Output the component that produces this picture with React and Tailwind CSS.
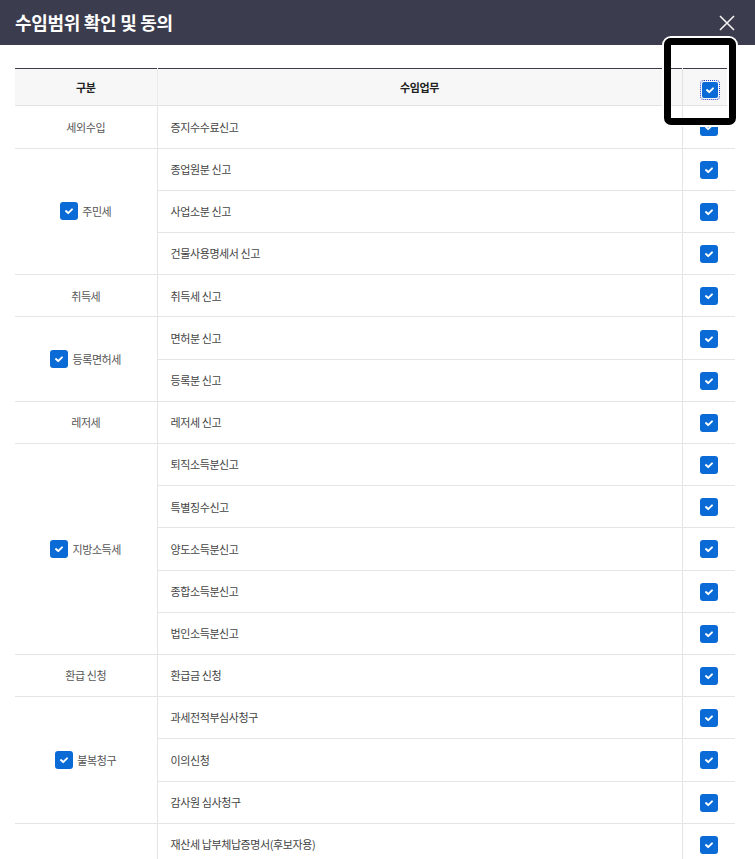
import React from 'react';

const FONT = { fontFamily: '"Noto Sans CJK KR", "Noto Sans", sans-serif' };

// 체크박스 (선택됨)
const Check = ({ focus }) => (
    <span
        className={
            focus
                ? 'inline-flex w-4 h-4 items-center justify-center rounded-[2px] bg-[#0b6bd6] outline-1 outline-dotted outline-[#1d3fd0] outline-offset-1 align-middle'
                : 'inline-flex w-[18px] h-[18px] items-center justify-center rounded-[3px] bg-[#0b6bd6] align-middle'
        }
    >
        <svg width="10" height="8" viewBox="0 0 10 8" fill="none">
            <path d="M2 4.1 L4.2 6.1 L8 2.4" stroke="white" strokeWidth="2" strokeLinecap="round" strokeLinejoin="round" />
        </svg>
    </span>
);

const groups = [
    { name: '세외수입', items: ['증지수수료신고'] },
    { name: '주민세', check: true, items: ['종업원분 신고', '사업소분 신고', '건물사용명세서 신고'] },
    { name: '취득세', items: ['취득세 신고'] },
    { name: '등록면허세', check: true, items: ['면허분 신고', '등록분 신고'] },
    { name: '레저세', items: ['레저세 신고'] },
    { name: '지방소득세', check: true, items: ['퇴직소득분신고', '특별징수신고', '양도소득분신고', '종합소득분신고', '법인소득분신고'] },
    { name: '환급 신청', items: ['환급금 신청'] },
    { name: '불복청구', check: true, items: ['과세전적부심사청구', '이의신청', '감사원 심사청구'] },
    { name: '', items: ['재산세 납부체납증명서(후보자용)', ''] },
];

const App = () => {
    return (
        <div className="relative w-[755px] bg-white" style={FONT}>
            {/* 상단 타이틀 바 */}
            <div className="h-[45px] bg-[#3b3c4d] flex items-center justify-between pl-[15px] pr-[20px]">
                <h1 className="text-white text-[18px] font-bold tracking-[-0.3px]">수임범위 확인 및 동의</h1>
                <svg width="16" height="16" viewBox="0 0 16 16">
                    <path d="M1 1 L15 15 M15 1 L1 15" stroke="#f2f2f2" strokeWidth="1.6" />
                </svg>
            </div>

            <div className="pt-[23px] px-[15px]">
                {/* 헤더 */}
                <table className="w-[712px] border-collapse table-fixed">
                    <colgroup>
                        <col className="w-[142px]" />
                        <col className="w-[525px]" />
                        <col />
                    </colgroup>
                    <thead>
                        <tr className="h-[37px] bg-[#f7f7f7] border-t border-t-[#3b3c4d] border-b border-b-[#e3e3e3]">
                            <th className="text-[11px] font-bold text-[#222] tracking-[-0.4px] border-r border-r-[#ebebeb]">구분</th>
                            <th className="text-[11px] font-bold text-[#222] tracking-[-0.4px] border-r border-r-[#e3e3e3]">수임업무</th>
                            <th className="text-left pl-[19px]"><Check focus /></th>
                        </tr>
                    </thead>
                </table>
                {/* 본문 */}
                <table className="w-[720px] border-collapse table-fixed">
                    <colgroup>
                        <col className="w-[142px]" />
                        <col className="w-[525px]" />
                        <col />
                    </colgroup>
                    <tbody className="text-[11px] text-[#444] tracking-[-0.4px]">
                        {groups.map((g) =>
                            g.items.map((item, i) => (
                                <tr key={g.name + item} className="h-[42.2px] border-b border-b-[#e5e5e5]">
                                    {i === 0 && (
                                        <td rowSpan={g.items.length} className="text-center text-[#555] border-r border-r-[#e5e5e5]">
                                            {g.check ? (
                                                <span className="inline-flex items-center gap-1">
                                                    <Check />
                                                    <span>{g.name}</span>
                                                </span>
                                            ) : (
                                                g.name
                                            )}
                                        </td>
                                    )}
                                    <td className="pl-[13px] border-r border-r-[#e5e5e5]">{item}</td>
                                    <td className="pl-[17px]">{item && <Check />}</td>
                                </tr>
                            ))
                        )}
                    </tbody>
                </table>
            </div>

            {/* 강조 박스 오버레이 */}
            <div className="absolute left-[664px] top-[38px] w-[72px] h-[87px] rounded-[7px] border-[7px] border-black ring-2 ring-white pointer-events-none" />
        </div>
    );
};

export default App;
